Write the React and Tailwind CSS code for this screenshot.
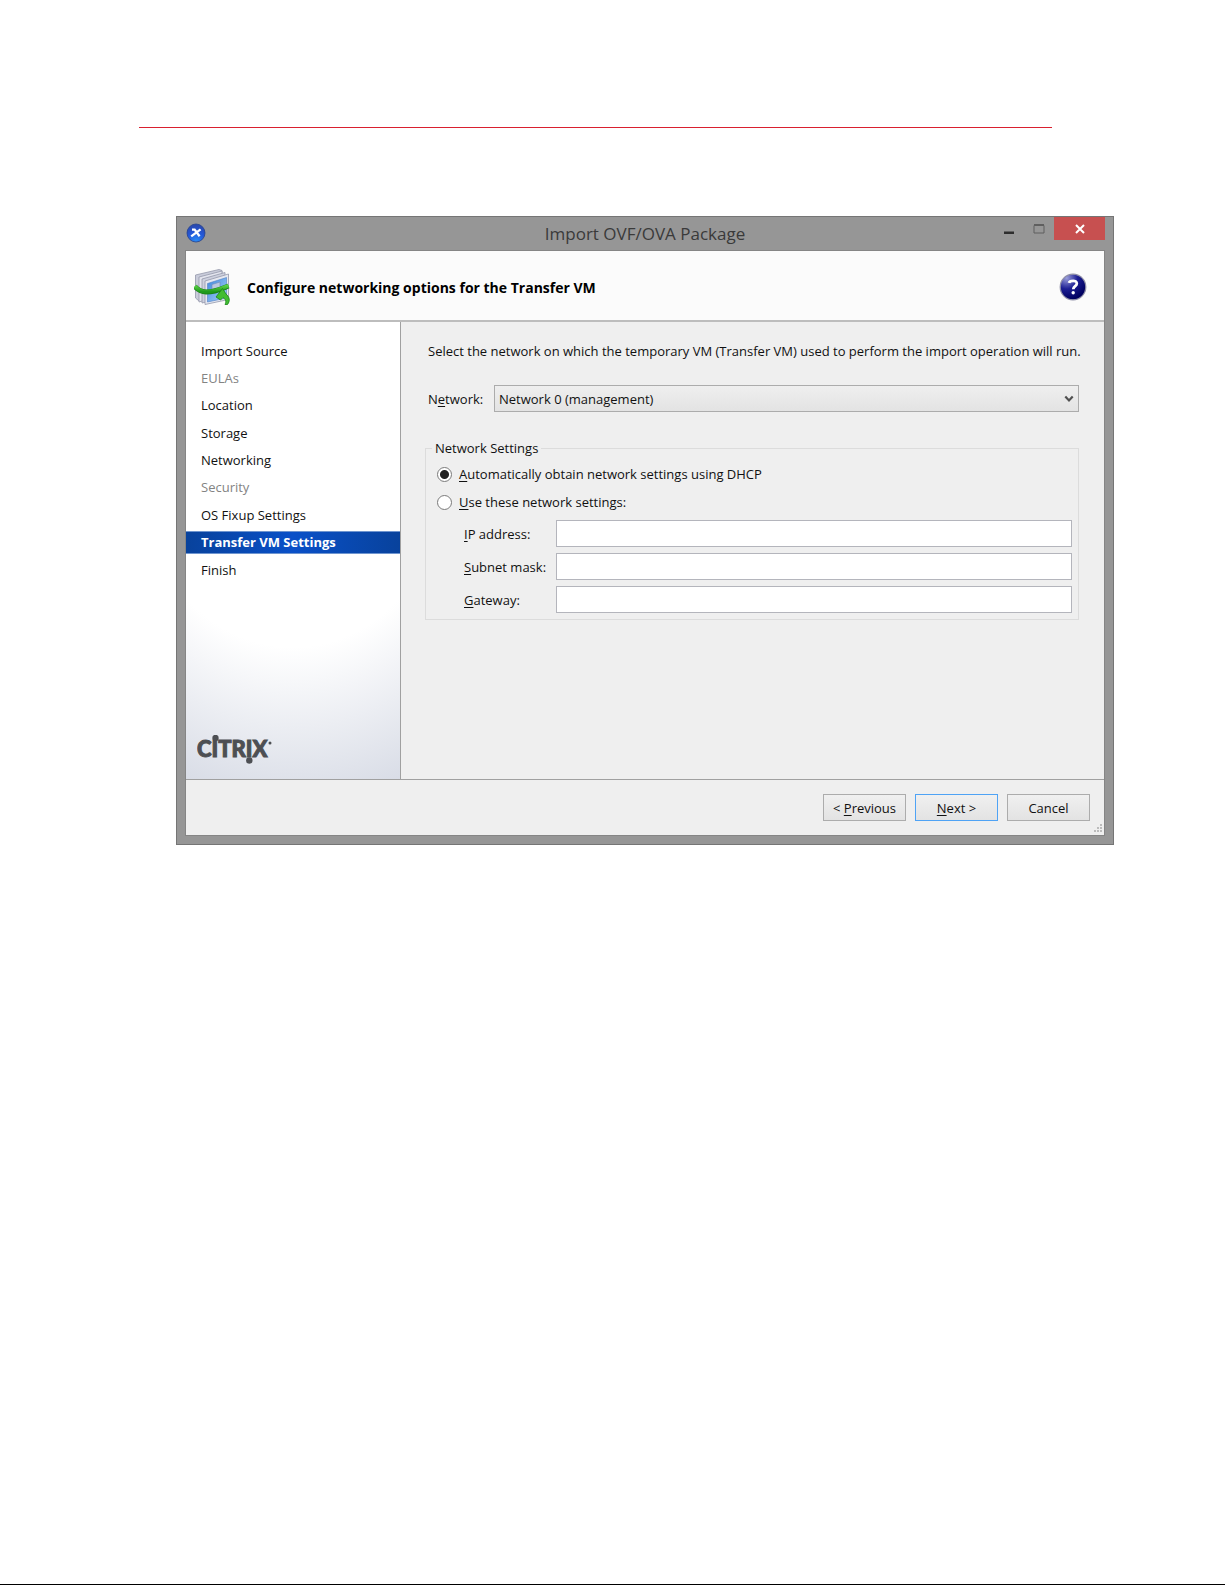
import { useState } from 'react';
import clsx from 'clsx';

const steps = [
  { name: 'Import Source' },
  { name: 'EULAs', disabled: true },
  { name: 'Location' },
  { name: 'Storage' },
  { name: 'Networking' },
  { name: 'Security', disabled: true },
  { name: 'OS Fixup Settings' },
  { name: 'Transfer VM Settings' },
  { name: 'Finish' },
];

const addressFields = [
  { id: 'ip', hotkey: 'I', rest: 'P address:' },
  { id: 'subnet', hotkey: 'S', rest: 'ubnet mask:' },
  { id: 'gateway', hotkey: 'G', rest: 'ateway:' },
];

function AppIcon() {
  return (
    <svg className="h-5 w-5" viewBox="0 0 20 20" aria-hidden="true">
      <defs>
        <radialGradient id="app-disc" cx="0.5" cy="0.95" r="0.9">
          <stop offset="0" stopColor="#2a8cf5" />
          <stop offset="0.55" stopColor="#2458d8" />
          <stop offset="1" stopColor="#2a48ae" />
        </radialGradient>
      </defs>
      <circle cx="10" cy="10" r="9" fill="url(#app-disc)" stroke="#23418f" strokeWidth="0.8" />
      <path d="M6 6.6h2.6l5 6.6M14.6 6.4L5.2 13.4" fill="none" stroke="#fff" strokeWidth="2.3" />
    </svg>
  );
}

function PackageIcon() {
  return (
    <svg className="h-9 w-9" viewBox="0 0 36 36" aria-hidden="true">
      <defs>
        <linearGradient id="pane" x1="0" y1="0" x2="1" y2="1">
          <stop offset="0" stopColor="#3f86dc" />
          <stop offset="1" stopColor="#a9d4fb" />
        </linearGradient>
        <linearGradient id="ribbon" x1="0" y1="0" x2="0" y2="1">
          <stop offset="0" stopColor="#5bd045" />
          <stop offset="1" stopColor="#1f9a1c" />
        </linearGradient>
      </defs>
      <g stroke="#9498ab" strokeWidth="0.8" strokeLinejoin="round">
        <path d="M1.5 6L25 .5l3 1v24L5 32l-3.500-3z" fill="#c9ccda" />
        <path d="M5 8L28 2v24L5 33z" fill="#e3e5ee" />
        <path d="M8 10L31 3.500v25L8 34z" fill="#cdd0de" />
        <path d="M11 12L34.500 5v25.500L11 35.500z" fill="#e6e8f0" />
      </g>
      <path d="M13.500 14.500L32.500 8.500v20.500L13.500 33z" fill="url(#pane)" stroke="#4f80c4" strokeWidth="0.6" />
      <path d="M18 15.500l8-2.500v6L18 21.500z" fill="#bcc9e0" stroke="#6f89b6" strokeWidth="0.6" />
      <path d="M.8 17.500c3.500 4 6 5.300 11.200 5.500 9 .2 15-3 22.500-6" fill="none" stroke="#198417" strokeWidth="5" />
      <path d="M.8 17.200c3.500 4 6 5.300 11.200 5.500 9 .2 15-3 22.500-6" fill="none" stroke="url(#ribbon)" strokeWidth="3.8" />
      <path
        d="M22 28l6.500-8.500 3.500 5.500c3.500 3 4.500 6.500 1.500 10.500h-2.500c1.500-3 .8-5-2-7l-2.500 2.500z"
        fill="#42bd32"
        stroke="#198417"
        strokeWidth="0.8"
      />
    </svg>
  );
}

function HelpIcon() {
  return (
    <svg className="h-7 w-7" viewBox="0 0 28 28" aria-hidden="true">
      <defs>
        <radialGradient id="help-ball" cx="0.25" cy="0.15" r="0.85">
          <stop offset="0" stopColor="#9a9edb" />
          <stop offset="0.5" stopColor="#1d1f94" />
          <stop offset="1" stopColor="#000060" />
        </radialGradient>
      </defs>
      <circle cx="14" cy="14" r="12.8" fill="url(#help-ball)" stroke="#8f8fa6" strokeWidth="1.2" />
      <path d="M10 9.800c.6-2.300 7.800-3.200 7.800.7 0 2.600-3.500 2.700-3.500 5.700" fill="none" stroke="#fff" strokeWidth="2.8" />
      <circle cx="14.2" cy="19.7" r="1.7" fill="#fff" />
    </svg>
  );
}

function CitrixLogo() {
  return (
    <svg className="h-8 w-20" viewBox="0 0 80 32" role="img" aria-label="Citrix">
      <g fill="#4d4f53">
        <text
          x="0"
          y="22"
          fontFamily="Lato, sans-serif"
          fontWeight="900"
          fontSize="22"
          stroke="#4d4f53"
        >
          CITRIX
        </text>
        <circle cx="18.5" cy="3" r="3.2" />
        <circle cx="52.3" cy="25.5" r="3.2" />
        <circle cx="73" cy="8" r="1.5" />
      </g>
    </svg>
  );
}

function Hotkey({ children }) {
  return <span className="underline underline-offset-2">{children}</span>;
}

function TitleBar() {
  return (
    <div className="flex h-[33px] items-start justify-between">
      <div className="w-[112px] pt-[6px] pl-px">
        <AppIcon />
      </div>
      <h1 className="pt-[5px] text-[17px] leading-6 text-[#3a3a3a]">Import OVF/OVA Package</h1>
      <div className="flex w-[112px] justify-end">
        <button aria-label="Minimize" className="flex h-[23px] w-[31px] items-center justify-center">
          <svg className="h-3 w-3" viewBox="0 0 12 12">
            <path d="M1 8.500h10V11H1z" fill="#2d2d2d" />
          </svg>
        </button>
        <button aria-label="Maximize" className="flex h-[23px] w-[30px] items-center justify-center">
          <svg className="h-3 w-3" viewBox="0 0 12 12">
            <path d="M1 2.500h10v7.500H1zM1 1.500h10" fill="none" stroke="#5f5f5f" />
          </svg>
        </button>
        <button aria-label="Close" className="flex h-[23px] w-[51px] items-center justify-center bg-[#c75050]">
          <svg className="h-3 w-3" viewBox="0 0 12 12">
            <path d="M2 2l8 8M10 2l-8 8" fill="none" stroke="#fff" strokeWidth="2" />
          </svg>
        </button>
      </div>
    </div>
  );
}

function Sidebar({ current, onSelect }) {
  return (
    <nav className="flex w-[215px] shrink-0 flex-col justify-between border-r border-[#a0a0a0] bg-white bg-[radial-gradient(280px_340px_at_50%_28%,#ffffff_58%,#d8dce6_105%)] pt-[17px]">
      <ul className="flex h-[242px] flex-col justify-between">
        {steps.map((step) => (
          <li key={step.name}>
            <button
              disabled={step.disabled}
              onClick={() => onSelect(step.name)}
              className={clsx(
                'block h-[23px] w-full pl-[15px] text-left',
                step.disabled && 'text-[#838383]',
                step.name === current &&
                  'border-y border-[#6f95cf] bg-linear-to-r from-[#08429c] via-[#0a50c8] to-[#08429c] font-bold text-white'
              )}
            >
              {step.name}
            </button>
          </li>
        ))}
      </ul>
      <div className="pb-3 pl-[11px]">
        <CitrixLogo />
      </div>
    </nav>
  );
}

function NetworkForm() {
  const [mode, setMode] = useState('dhcp');

  const radioClass =
    'h-[15px] w-[15px] appearance-none rounded-full border border-[#7a7a7a] bg-white checked:bg-[radial-gradient(circle,#222222_4px,#ffffff_5px)]';

  return (
    <main className="min-w-0 flex-1 bg-[#efefef] pt-[17px] pr-[25px] pl-[24px]">
      <p className="-mr-5 pl-[3px] leading-6">
        Select the network on which the temporary VM (Transfer VM) used to perform the import operation will run.
      </p>

      <div className="mt-[22px] flex items-center pl-[3px]">
        <label htmlFor="network" className="w-[66px]">
          N<Hotkey>e</Hotkey>twork:
        </label>
        <div className="relative flex-1">
          <select
            id="network"
            className="block h-[27px] w-full appearance-none border border-[#acacac] bg-linear-to-b from-[#efefef] to-[#e3e3e3] pl-1"
          >
            <option>Network 0 (management)</option>
          </select>
          <svg className="pointer-events-none absolute top-[8px] right-[4px] h-3 w-3" viewBox="0 0 12 12">
            <path d="M2.300 3.500L6 7.500 9.700 3.500" fill="none" stroke="#505050" strokeWidth="2.2" />
          </svg>
        </div>
      </div>

      <fieldset className="mt-6 border border-[#dcdcdc] pr-[6px] pb-[6px] pl-[11px]">
        <legend className="-ml-[5px] px-[3px] leading-6">Network Settings</legend>
        <div className="flex h-7 items-center gap-[7px]">
          <input
            type="radio"
            id="dhcp"
            name="mode"
            className={radioClass}
            checked={mode === 'dhcp'}
            onChange={() => setMode('dhcp')}
          />
          <label htmlFor="dhcp">
            <Hotkey>A</Hotkey>utomatically obtain network settings using DHCP
          </label>
        </div>
        <div className="flex h-7 items-center gap-[7px]">
          <input
            type="radio"
            id="manual"
            name="mode"
            className={radioClass}
            checked={mode === 'manual'}
            onChange={() => setMode('manual')}
          />
          <label htmlFor="manual">
            <Hotkey>U</Hotkey>se these network settings:
          </label>
        </div>
        <div className="mt-1 flex flex-col gap-[6px] pl-[27px]">
          {addressFields.map((field) => (
            <div key={field.id} className="flex items-center">
              <label htmlFor={field.id} className="w-[92px] shrink-0">
                <Hotkey>{field.hotkey}</Hotkey>
                {field.rest}
              </label>
              <input id={field.id} type="text" className="h-[27px] min-w-0 flex-1 border border-[#b4b5bc] bg-white px-1" />
            </div>
          ))}
        </div>
      </fieldset>
    </main>
  );
}

function Footer() {
  const buttonClass = 'h-[27px] w-[83px] border bg-linear-to-b from-[#f0f0f0] to-[#e3e3e3]';

  return (
    <footer className="relative flex h-[56px] items-start justify-end gap-[9px] border-t border-[#a0a0a0] bg-[#efefef] pt-[14px] pr-[14px]">
      <button className={clsx(buttonClass, 'border-[#acacac]')}>
        &lt; <Hotkey>P</Hotkey>revious
      </button>
      <button className={clsx(buttonClass, 'border-[#4fa3f5]')}>
        <Hotkey>N</Hotkey>ext &gt;
      </button>
      <button className={clsx(buttonClass, 'border-[#acacac]')}>Cancel</button>
      {/* Resize grip */}
      <svg className="absolute right-[1px] bottom-[2px] h-[10px] w-[10px]" viewBox="0 0 10 10" fill="#bcbcbc">
        <path d="M7 1h2v2H7zM4 4h2v2H4zM7 4h2v2H7zM1 7h2v2H1zM4 7h2v2H4zM7 7h2v2H7z" />
      </svg>
    </footer>
  );
}

export default function App() {
  const [current, setCurrent] = useState('Transfer VM Settings');

  return (
    <div className="min-h-screen border-b border-black bg-white pt-[127px] pr-[111px] pl-[139px] font-['Open_Sans','Noto_Sans',sans-serif] text-[13px] leading-5 text-[#111111]">
      <hr className="mr-[62px] border-[#d9202f]" />

      <div className="mt-[88px] ml-[37px] border border-[#757575] bg-[#969696] px-[8px] pb-[8px]">
        <TitleBar />
        <div className="border border-[#858585]">
          <header className="flex h-[71px] items-center border-b-2 border-[#bdbdbd] bg-[#fbfbfb] pt-[2px] pr-[17px] pl-[8px]">
            <PackageIcon />
            <h2 className="flex-1 pt-[2px] pl-[17px] text-[14px] font-bold text-black">
              Configure networking options for the Transfer VM
            </h2>
            <button aria-label="Help">
              <HelpIcon />
            </button>
          </header>
          <div className="flex h-[457px]">
            <Sidebar current={current} onSelect={setCurrent} />
            <NetworkForm />
          </div>
          <Footer />
        </div>
      </div>
    </div>
  );
}
